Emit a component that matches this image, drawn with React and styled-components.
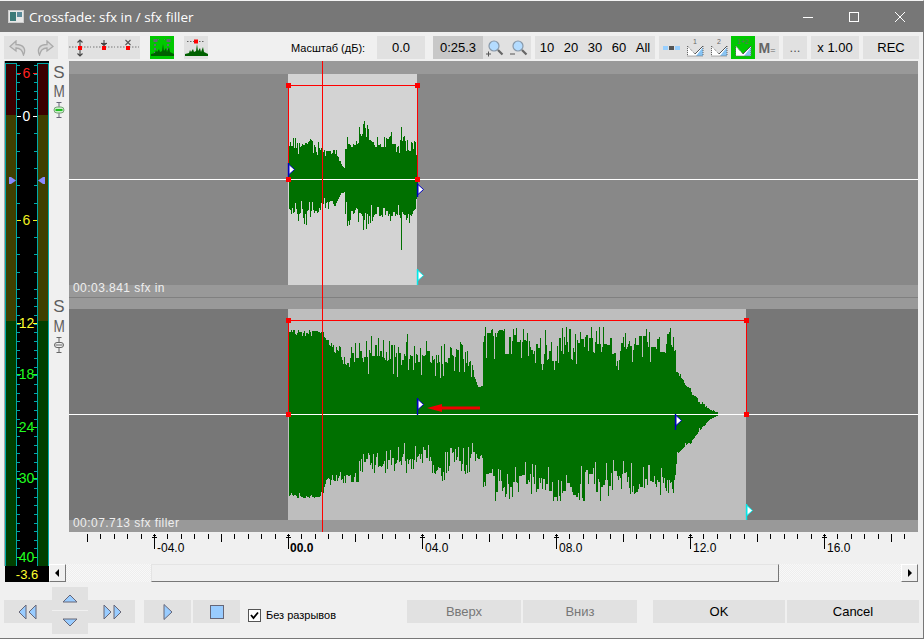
import React from 'react';
import styled, { createGlobalStyle } from 'styled-components';

const Global = createGlobalStyle`
  html, body { margin: 0; padding: 0; background: #f0f0f0; }
  #root { width: 924px; height: 639px; overflow: hidden; }
`;

const SANS = `"Liberation Sans", Arial, sans-serif`;

/* ---------- shell ---------- */
const Win = styled.div`
  width: 924px; height: 639px; box-sizing: border-box;
  display: flex; flex-direction: column;
  background: #f0f0f0; border-right: 1px solid #777; border-bottom: 1px solid #777;
  border-top: 1px solid #f4f4f4;
  font-family: ${SANS}; color: #000; overflow: hidden;
`;
const TitleBar = styled.div`
  height: 31px; flex: none; background: #777; display: flex; align-items: center;
  padding-left: 8px; color: #fff;
`;
const TitleText = styled.span`
  font: 13.5px "Open Sans", "Noto Sans", sans-serif; margin-left: 5px; flex: 1;
`;
const WinBtn = styled.div`
  width: 46px; height: 31px; display: flex; align-items: center; justify-content: center;
`;

/* ---------- toolbar ---------- */
const Toolbar = styled.div`
  height: 29px; flex: none; box-sizing: border-box; padding: 4px 0 2px 4px;
  display: flex; align-items: stretch;
`;
const Group = styled.div`
  display: flex; margin-left: ${p => p.$gap || 0}px; background: #e1e1e1;
`;
const IconCell = styled.div`
  width: ${p => p.$w || 24}px; display: flex; align-items: center; justify-content: center;
  background: ${p => p.$on ? '#00c800' : 'transparent'};
`;
const ValueCell = styled.div`
  width: ${p => p.$w}px; display: flex; align-items: center; justify-content: center;
  font-size: 13px; color: ${p => p.$muted ? '#555' : '#000'};
  background: ${p => p.$dark ? '#c8c8c8' : '#e1e1e1'};
  margin-left: ${p => p.$gap || 0}px;
`;
const NumCell = styled.div`
  width: 24px; display: flex; align-items: center; justify-content: center; font-size: 13px;
`;
const ToolLabel = styled.div`
  margin-left: 83px; width: 86px; display: flex; align-items: center; font-size: 11px; color: #000;
`;
const MEq = styled.span`
  font-size: 14px; font-weight: bold; color: #666;
  & > small { font-size: 9px; font-weight: normal; }
`;

/* ---------- main ---------- */
const Main = styled.div`
  height: 521px; flex: none; display: flex;
`;
const MeterCol = styled.div`
  width: 45px; margin-left: 4px; flex: none; display: flex; flex-direction: column; height: 521px;
`;
const MeterBody = styled.div`
  position: relative; height: 505px; background: #000; flex: none; box-sizing: border-box;
  border-left: 1px solid #a8a8a8;
`;
const Channel = styled.div`
  position: absolute; top: 2px; bottom: 0; width: 10px; left: ${p => p.$left}px;
  border: solid #00a8a8; border-width: 1px 1px 0 1px;
  background: linear-gradient(#3a0000 0 51px, #3f3f00 51px 257px, #003f00 257px);
`;
const MeterMark = styled.div`
  position: absolute; left: -1px; right: 0; top: ${p => p.$y}px; height: 14px; margin-top: -7.5px;
  display: flex; align-items: center; justify-content: center;
  font-size: 14px; color: ${p => p.$c};
`;
const MeterValue = styled.div`
  height: 16px; background: #000; color: #ffff30; font-size: 13px; margin-left: 1px;
  display: flex; align-items: center; justify-content: center;
`;
const MeterArt = styled.svg`
  position: absolute; left: -1px; top: 0;
`;
const Right = styled.div`
  flex: 1; display: flex; flex-direction: column; min-width: 0;
`;
const EditArea = styled.div`
  height: 471px; flex: none; display: flex;
`;
const SideCol = styled.div`
  width: 20px; flex: none; display: flex; flex-direction: column;
`;
const SideSet = styled.div`
  height: ${p => p.$h}px; box-sizing: border-box; padding-top: ${p => p.$pt}px;
  display: flex; flex-direction: column; align-items: center; color: #5e5e5e;
`;
const SideLetter = styled.div`
  font-size: 17px; line-height: 20px; height: ${p => p.$h || 19}px; transform: scaleX(${p => p.$sx || 1});
`;
const Tracks = styled.div`
  width: 849px; flex: none; position: relative; display: flex; flex-direction: column;
`;
const Band = styled.div`
  position: relative; z-index: 1;
  height: ${p => p.$h}px; flex: none; background: #999; color: #eee; font-size: 12px;
  line-height: 7px; padding-left: 4px; letter-spacing: 0.45px; white-space: nowrap;
  border-bottom: ${p => p.$line ? '1px solid #808080' : 'none'};
  box-sizing: border-box;
`;
const Lane = styled.div`
  position: relative; height: 211px; flex: none; background: ${p => p.$bg};
`;
const ClipBg = styled.div`
  position: absolute; top: 0; bottom: 0; left: ${p => p.$x}px; width: ${p => p.$w}px; background: ${p => p.$bg};
`;
const LaneArt = styled.svg`
  position: absolute; left: 0; top: 0; display: block;
`;
const Playhead = styled.div`
  position: absolute; z-index: 2; left: 253px; top: 0; bottom: 0; width: 1.4px; background: #ff0000;
`;

/* ---------- ruler & scrollbar ---------- */
const Ruler = styled.div`
  position: relative; height: 32px; margin-left: 20px; flex: none;
`;
const RulerArt = styled.svg`
  position: absolute; left: 0; top: 0;
`;
const RulerLabel = styled.span`
  position: absolute; top: 9px; left: ${p => p.$x}px; font-size: 12px; line-height: 14px;
  font-weight: ${p => p.$bold ? 'bold' : 'normal'}; color: #000;
`;
const ScrollBar = styled.div`
  height: 18px; width: 869px; flex: none; display: flex;
  background-image: repeating-conic-gradient(#f8f8f8 0 25%, #eeeeee 0 50%);
  background-size: 2px 2px;
`;
const ScrollBtn = styled.div`
  width: 17px; box-sizing: border-box; background: #f0f0f0; flex: none;
  border: 1px solid; border-color: #fff #777 #777 #fff;
  display: flex; align-items: center; justify-content: center;
`;
const Thumb = styled.div`
  width: 628px; margin-left: 85px; margin-right: 122px; box-sizing: border-box; flex: none; background: #f0f0f0;
  border: 1px solid; border-color: #e4e4e4 #777 #777 #e4e4e4;
`;

/* ---------- footer ---------- */
const Footer = styled.div`
  flex: 1; display: flex; align-items: center; padding: 3px 0 0 4px; min-height: 0;
`;
const Pad = styled.div`
  width: 36px; height: 47px; flex: none; display: flex; flex-direction: column; gap: 1px; background: #f0f0f0;
  align-self: flex-start; margin-top: 2px;
`;
const PadKey = styled.div`
  flex: 1; background: #e1e1e1; display: flex; align-items: center; justify-content: center;
`;
const FootBtn = styled.div`
  width: ${p => p.$w}px; height: 23px; flex: none; margin-left: ${p => p.$gap || 0}px; background: #e1e1e1;
  display: flex; align-items: center; justify-content: center;
  font-size: 13px; color: ${p => p.$off ? '#777' : '#000'};
`;
const Check = styled.label`
  display: flex; align-items: center; margin: 7px 0 0 8px; width: 159px; font-size: 11px; color: #000;
`;
const CheckBox = styled.span`
  width: 11px; height: 11px; border: 1px solid #555; background: #fff; margin-right: 5px; flex: none;
  display: flex; align-items: center; justify-content: center;
`;

/* ---------- waveform ---------- */
function rng(seed) {
  let s = seed;
  return () => { s = (s * 1664525 + 1013904223) >>> 0; return s / 4294967296; };
}
function interp(tbl, x) {
  for (let i = 0; i < tbl.length - 1; i++) {
    if (x <= tbl[i + 1][0]) {
      const t = (x - tbl[i][0]) / Math.max(1, tbl[i + 1][0] - tbl[i][0]);
      return [tbl[i][1] + (tbl[i + 1][1] - tbl[i][1]) * t, tbl[i][2] + (tbl[i + 1][2] - tbl[i][2]) * t];
    }
  }
  const l = tbl[tbl.length - 1];
  return [l[1], l[2]];
}
function column(r, slow, held, skew) {
  let v = 0.5 * slow + 0.5 * held;
  const k = r();
  if (k < 0.12) v += 0.45;
  else if (k < 0.22) v *= 0.2;
  return Math.pow(Math.max(0, Math.min(1, v)), skew);
}
function wavePath(top, bottom, x0, x1, cy, seed, skew) {
  const r = rng(seed);
  let d = '';
  let heldT = 0.5, heldB = 0.5, slowT = 0.5, slowB = 0.5;
  for (let x = x0; x <= x1; x++) {
    if (x % 9 === 0) { slowT = r(); slowB = r(); }
    if (r() < 0.65) heldT = r();
    if (r() < 0.65) heldB = r();
    const [tv, tp] = interp(top, x);
    const [bv, bp] = interp(bottom, x);
    const a = Math.round(tv + (tp - tv) * column(r, slowT, heldT, skew));
    const b = Math.round(bv + (bp - bv) * column(r, slowB, heldB, skew));
    d += `M${x - 69} ${cy - a}h1v${a + b}h-1z`;
  }
  return d;
}
const T1Top = [[289,24,46],[300,22,41],[305,24,42],[320,22,36],[335,20,31],[341,14,16],[344,10,12],[345,20,50],[355,20,42],[362,22,60],[375,22,44],[390,24,47],[400,24,47],[401,50,73],[402,26,50],[408,26,52],[416,20,46],[417,15,20]];
const T1Bot = [[289,24,44],[300,20,42],[305,22,46],[320,20,39],[335,16,29],[341,12,14],[344,12,14],[345,20,48],[355,22,42],[362,24,62],[375,20,42],[390,24,42],[400,24,44],[401,55,76],[402,24,46],[410,24,52],[417,15,25]];
const T2Top = [[289,76,84],[322,76,84],[326,68,76],[340,48,70],[350,42,66],[360,30,76],[400,30,82],[430,30,72],[450,30,82],[470,30,62],[478,22,30],[482,22,30],[483,48,87],[530,40,87],[550,40,87],[600,34,87],[640,46,87],[670,42,87],[675,40,72],[676,36,45],[682,28,40],[690,20,28],[700,9,14],[710,3,5],[717,1,2]];
const T2Bot = [[289,78,84],[322,76,84],[326,62,72],[340,48,70],[360,36,68],[400,24,62],[420,22,52],[440,26,68],[470,26,58],[482,35,45],[483,50,87],[550,40,87],[620,40,87],[672,44,82],[675,45,72],[677,32,42],[690,25,30],[700,12,16],[710,4,6],[717,1,2]];

const Flag = ({ x, y, h = 14, color = '#0000c0' }) => (
  <g>
    <path d={`M${x + .5} ${y}V${y + h}`} stroke={color} strokeWidth="1.4" />
    <path d={`M${x + 1} ${y + 1.5}L${x + 6.5} ${y + 6.5}L${x + 1} ${y + 11.5}Z`} fill="#fff" stroke={color} strokeWidth="1" />
  </g>
);

const Handle = ({ x, y }) => <rect x={x - 2.5} y={y - 2.5} width="5" height="5" fill="#f00" />;

function LaneDrawing({ top, bottom, seed, skew, x0, selTop, xR, flags, cyan, wave: waveEnd, children }) {
  const d = React.useMemo(() => wavePath(top, bottom, x0, waveEnd, 105, seed, skew), []);
  const l = x0 - 69 - 1 + .5, r = xR;
  return (
    <LaneArt width="849" height="211" shapeRendering="crispEdges">
      <path d={d} fill="#007000" />
      <rect x="0" y="105" width="849" height="1" fill="#fff" />
      <path d={`M${l} 105V${selTop}H${r}V105`} fill="none" stroke="#f00" strokeWidth="1" />
      <Handle x={l} y={selTop} /><Handle x={r} y={selTop} />
      <Handle x={l} y={105.5} /><Handle x={r} y={105.5} />
      <g shapeRendering="auto">
        {flags.map((f, i) => <Flag key={i} {...f} />)}
        <Flag x={cyan[0]} y={cyan[1]} h={16} color="#00e8e8" />
        {children}
      </g>
    </LaneArt>
  );
}

/* ---------- icons ---------- */
const Undo = ({ flip }) => (
  <svg width="18" height="16" viewBox="0 0 18 16" style={flip ? { transform: 'scaleX(-1)' } : undefined}>
    <path d="M7 1L1 6.5L7 11V8C11 8 13.5 10 14.5 15C17 10 15.5 4.5 7 4.5Z" fill="#d8d8d8" stroke="#aaa" strokeWidth="1.3" />
  </svg>
);
const Dots = () => <path d="M1 10H23" stroke="#777" strokeWidth="1" strokeDasharray="1.5 1.5" />;
const Sq = ({ x = 10, y = 8 }) => <rect x={x} y={y} width="4" height="4" fill="#f00" />;
const SplitA = () => (
  <svg width="24" height="22" viewBox="0 0 24 22"><Dots /><Sq y={9} />
    <path d="M12 3V9M12 13V19M9.5 5.5L12 3L14.5 5.5M9.5 16.5L12 19L14.5 16.5" stroke="#444" fill="none" strokeWidth="1.1" /></svg>
);
const SplitB = () => (
  <svg width="24" height="22" viewBox="0 0 24 22"><Dots /><Sq y={9} />
    <path d="M12 3V9M9 6.5H15M9.5 6L12 8.5L14.5 6" stroke="#444" fill="none" strokeWidth="1.1" /></svg>
);
const SplitC = () => (
  <svg width="24" height="22" viewBox="0 0 24 22"><Dots /><Sq y={9} />
    <path d="M9.5 3L14.5 8M14.5 3L9.5 8" stroke="#555" fill="none" strokeWidth="1.1" /></svg>
);
const Peaks = "M1 20V18L5 17L6 14L7 16L9 13L10 16L12 15L13 8L14 15L16 12L17 16L19 11L20 16L24 18V20Z";
const WaveOn = () => (
  <svg width="24" height="23" viewBox="0 0 24 23">
    <path d="M5 4V17M18 4V17" stroke="#667" strokeWidth="2" strokeDasharray="2 2" />
    <rect x="3.5" y="3" width="4" height="3" fill="#667" /><rect x="16.5" y="3" width="4" height="3" fill="#667" />
    <rect x="8" y="3" width="1" height="1" fill="#667" /><rect x="14" y="3" width="1" height="1" fill="#667" />
    <path d={Peaks} fill="#006000" />
  </svg>
);
const WaveOff = () => (
  <svg width="24" height="23" viewBox="0 0 24 23">
    <path d="M3 5.5H21" stroke="#666" strokeDasharray="1.5 1.5" />
    <rect x="10" y="3.5" width="4" height="4" fill="#f00" />
    <path d={Peaks} fill="#006000" />
  </svg>
);
const Magnifier = ({ sign }) => (
  <svg width="18" height="18" viewBox="0 0 18 18">
    <circle cx="8" cy="7" r="5" fill="#b4dcff" stroke="#8899aa" strokeWidth="1.2" />
    <path d="M12 11L16.5 15.5" stroke="#666" strokeWidth="2.2" />
    <path d={sign === '+' ? 'M0 15H5M2.5 12.5V17.5' : 'M0 15H5'} stroke="#555" strokeWidth="1" />
  </svg>
);
const Blocks = () => (
  <svg width="24" height="10" viewBox="0 0 24 10">
    <rect x="4" y="3" width="5" height="4" fill="#99d0ff" /><rect x="10" y="3" width="5" height="4" fill="#555" /><rect x="16" y="3" width="5" height="4" fill="#99d0ff" />
  </svg>
);
const Fade = ({ n }) => (
  <svg width="24" height="22" viewBox="0 0 24 22">
    <path d="M5 9L12 17L20 9V19H5Z" fill="#fff" />
    <path d="M13 19L20 10V19Z" fill="#88c4f4" />
    <path d="M4.5 9L12 17M4.5 19H20M4.5 9V19M20 9V19" stroke="#666" strokeDasharray="1 1" fill="none" />
    <path d="M12 17L20 9" stroke="#555" />
    <text x="12" y="7" fontSize="7" fill="#666" textAnchor="middle" fontFamily={SANS}>{n}</text>
  </svg>
);

/* ---------- meter art ---------- */
function meterTicks() {
  const ys = [];
  for (let y = 55; y > 2; y -= 8.5) ys.push(y);
  for (let y = 55; y < 228; y += 17.3) ys.push(y);
  for (let y = 228; y < 505; y += 8.65) ys.push(y);
  return ys;
}
const Marks = [
  ['6', 12, '#ff2020'], ['0', 55, '#ffffff'], ['6', 159, '#f0f020'], ['12', 262, '#ffff30'],
  ['18', 313, '#20ff20'], ['24', 366, '#20ff20'], ['30', 417, '#20ff20'], ['40', 496, '#20ff20'],
];

const rulerTicks = [];
for (let k = 0; k < 62; k++) rulerTicks.push(k);

export default function App() {
  return (
    <>
      <Global />
      <Win>
        <TitleBar>
          <svg width="16" height="13" viewBox="0 0 16 13">
            <rect x=".5" y=".5" width="15" height="12" fill="#e8e8e8" stroke="#ccc" />
            <rect x="2" y="2" width="6" height="9" fill="#3c7a78" /><rect x="9" y="2" width="5" height="5" fill="#5a8a9a" />
          </svg>
          <TitleText>Crossfade: sfx in / sfx filler</TitleText>
          <WinBtn><svg width="10" height="10"><path d="M0 5.5H10" stroke="#fff" /></svg></WinBtn>
          <WinBtn><svg width="10" height="10"><rect x=".5" y=".5" width="9" height="9" fill="none" stroke="#fff" /></svg></WinBtn>
          <WinBtn><svg width="10" height="10"><path d="M0 0L10 10M10 0L0 10" stroke="#fff" /></svg></WinBtn>
        </TitleBar>

        <Toolbar>
          <Group>
            <IconCell $w={27}><Undo /></IconCell>
            <IconCell $w={27}><Undo flip /></IconCell>
          </Group>
          <Group $gap={10}>
            <IconCell><SplitA /></IconCell>
            <IconCell><SplitB /></IconCell>
            <IconCell><SplitC /></IconCell>
          </Group>
          <Group $gap={10}><IconCell $on><WaveOn /></IconCell></Group>
          <Group $gap={10}><IconCell><WaveOff /></IconCell></Group>
          <ToolLabel>Масштаб (дБ):</ToolLabel>
          <ValueCell $w={48}>0.0</ValueCell>
          <ValueCell $w={50} $gap={8} $dark>0:25.3</ValueCell>
          <Group>
            <IconCell><Magnifier sign="+" /></IconCell>
            <IconCell><Magnifier sign="-" /></IconCell>
          </Group>
          <Group $gap={4}>
            <NumCell>10</NumCell><NumCell>20</NumCell><NumCell>30</NumCell><NumCell>60</NumCell><NumCell>All</NumCell>
          </Group>
          <Group $gap={4}>
            <IconCell><Blocks /></IconCell>
            <IconCell><Fade n="1" /></IconCell>
            <IconCell><Fade n="2" /></IconCell>
            <IconCell $on><Fade n="1+2" /></IconCell>
            <IconCell><MEq>M<small>=</small></MEq></IconCell>
          </Group>
          <ValueCell $w={24} $gap={4} $muted>...</ValueCell>
          <ValueCell $w={48} $gap={4}>x 1.00</ValueCell>
          <ValueCell $w={56} $gap={4}>REC</ValueCell>
        </Toolbar>

        <Main>
          <MeterCol>
            <MeterBody>
              <Channel $left={0} />
              <Channel $left={32} />
              <MeterArt width="45" height="505" shapeRendering="crispEdges">
                {meterTicks().map((y, i) => (
                  <path key={i} d={`M13 ${Math.round(y)}h2.5M30 ${Math.round(y)}h3`} stroke="#00a8a8" />
                ))}
                {Marks.map((m, i) => <path key={i} d={`M13 ${m[1]}h4M29 ${m[1]}h4`} stroke={m[2]} />)}
                <path d="M5 116V123H7L12 119.5L7 116Z" fill="#8a8aff" shapeRendering="auto" />
                <path d="M41 116V123H39L34 119.5L39 116Z" fill="#8a8aff" shapeRendering="auto" />
              </MeterArt>
              {Marks.map((m, i) => <MeterMark key={i} $y={m[1]} $c={m[2]}>{m[0]}</MeterMark>)}
            </MeterBody>
            <MeterValue>-3.6</MeterValue>
          </MeterCol>

          <Right>
            <EditArea>
              <SideCol>
                <SideSet $h={235} $pt={2}>
                  <SideLetter>S</SideLetter>
                  <SideLetter $sx={0.8}>M</SideLetter>
                  <svg width="14" height="18" viewBox="0 0 14 18">
                    <path d="M7 1V17M4.5 1.5H9.5M4.5 16.5H9.5" stroke="#667" />
                    <rect x="2" y="6" width="10" height="6" rx="3" fill="#c8f0c8" stroke="#7aa07a" />
                    <rect x="3.5" y="8" width="7" height="2" fill="#20c020" />
                  </svg>
                </SideSet>
                <SideSet $h={236} $pt={1}>
                  <SideLetter $h={20}>S</SideLetter>
                  <SideLetter $sx={0.8}>M</SideLetter>
                  <svg width="14" height="18" viewBox="0 0 14 18">
                    <path d="M7 1V17M4.5 1.5H9.5M4.5 16.5H9.5" stroke="#666" />
                    <rect x="2.5" y="6.5" width="9" height="5" rx="2.5" fill="#f0f0f0" stroke="#666" />
                    <path d="M3.5 9H10.5" stroke="#666" />
                  </svg>
                </SideSet>
              </SideCol>
              <Tracks>
                <Band $h={13} />
                <Lane $bg="#888888">
                  <ClipBg $x={219} $w={129} $bg="#d3d3d3" />
                  <LaneDrawing top={T1Top} bottom={T1Bot} seed={11} skew={1} x0={289} wave={417} selTop={11.5} xR={348.5}
                    flags={[{ x: 219, y: 89 }, { x: 348, y: 109 }]} cyan={[348, 195]} />
                </Lane>
                <Band $h={13} $line>00:03.841 sfx in</Band>
                <Band $h={11} />
                <Lane $bg="#777777">
                  <ClipBg $x={219} $w={458} $bg="#bebebe" />
                  <LaneDrawing top={T2Top} bottom={T2Bot} seed={29} skew={0.65} x0={289} wave={717} selTop={11.5} xR={677.5}
                    flags={[{ x: 348, y: 89, h: 17 }, { x: 606, y: 105, h: 16 }]} cyan={[677, 195]}>
                    <path d="M358 99L373 95V97.5H411V100.5H373V103Z" fill="#f00000" />
                  </LaneDrawing>
                </Lane>
                <Band $h={12}>00:07.713 sfx filler</Band>
                <Playhead />
              </Tracks>
            </EditArea>

            <Ruler>
              <RulerArt width="849" height="32" shapeRendering="crispEdges">
                {rulerTicks.map(k => {
                  const x = Math.round(18 + 13.4 * k);
                  if (x > 845) return null;
                  const major = k % 10 === 5;
                  const long = k % 5 === 0;
                  return major
                    ? <g key={k}><path d={`M${x} 2V17`} stroke="#000" /><path d={`M${x - 2} 5H${x + 3}M${x - 1} 3H${x + 2}`} stroke="#000" /></g>
                    : <path key={k} d={`M${x} 2V${long ? 10 : 7}`} stroke="#000" />;
                })}
              </RulerArt>
              <RulerLabel $x={88}>-04.0</RulerLabel>
              <RulerLabel $x={221} $bold>00.0</RulerLabel>
              <RulerLabel $x={356}>04.0</RulerLabel>
              <RulerLabel $x={490}>08.0</RulerLabel>
              <RulerLabel $x={624}>12.0</RulerLabel>
              <RulerLabel $x={758}>16.0</RulerLabel>
            </Ruler>

            <ScrollBar>
              <ScrollBtn><svg width="5" height="8"><path d="M4 0V8L0 4Z" fill="#000" /></svg></ScrollBtn>
              <Thumb />
              <ScrollBtn><svg width="5" height="8"><path d="M1 0V8L5 4Z" fill="#000" /></svg></ScrollBtn>
            </ScrollBar>
          </Right>
        </Main>

        <Footer>
          <FootBtn $w={48}>
            <svg width="20" height="16" viewBox="0 0 20 16">
              <path d="M8 1V15L1 8Z M18 1V15L11 8Z" fill="#99ccff" stroke="#667" />
            </svg>
          </FootBtn>
          <Pad>
            <PadKey><svg width="16" height="9" viewBox="0 0 16 9"><path d="M8 1L15 8H1Z" fill="#99ccff" stroke="#667" /></svg></PadKey>
            <PadKey><svg width="16" height="9" viewBox="0 0 16 9"><path d="M8 8L15 1H1Z" fill="#99ccff" stroke="#667" /></svg></PadKey>
          </Pad>
          <FootBtn $w={47}>
            <svg width="20" height="16" viewBox="0 0 20 16">
              <path d="M2 1V15L9 8Z M12 1V15L19 8Z" fill="#99ccff" stroke="#667" />
            </svg>
          </FootBtn>
          <FootBtn $w={47} $gap={9}>
            <svg width="10" height="16" viewBox="0 0 10 16"><path d="M1 .5V15.5L9 8Z" fill="#99ccff" stroke="#667" /></svg>
          </FootBtn>
          <FootBtn $w={47} $gap={2}>
            <svg width="14" height="14" viewBox="0 0 14 14"><rect x=".5" y=".5" width="13" height="13" fill="#99ccff" stroke="#667" /></svg>
          </FootBtn>
          <Check>
            <CheckBox><svg width="9" height="9" viewBox="0 0 9 9"><path d="M1 4L3.5 7L8 1.5" stroke="#000" strokeWidth="1.8" fill="none" /></svg></CheckBox>
            Без разрывов
          </Check>
          <FootBtn $w={114} $off>Вверх</FootBtn>
          <FootBtn $w={114} $gap={2} $off>Вниз</FootBtn>
          <FootBtn $w={132} $gap={16}>OK</FootBtn>
          <FootBtn $w={132} $gap={2}>Cancel</FootBtn>
        </Footer>
      </Win>
    </>
  );
}
